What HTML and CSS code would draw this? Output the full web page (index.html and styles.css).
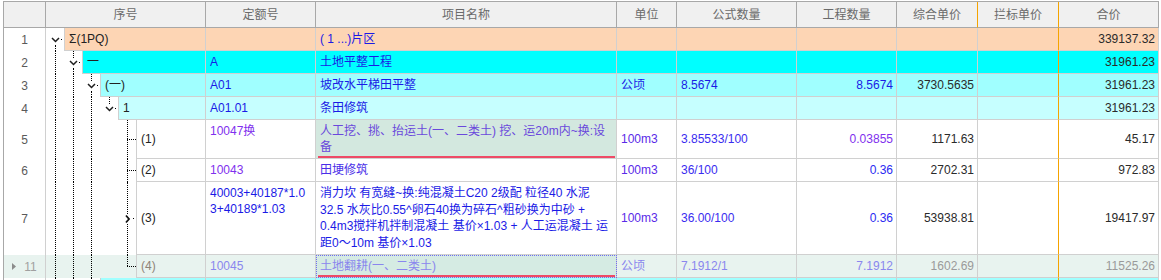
FILE: index.html
```html
<!DOCTYPE html>
<html lang="zh">
<head>
<meta charset="utf-8">
<title>预算表</title>
<link rel="stylesheet" href="styles.css">
</head>
<body>
<div class="grid">
  <div class="row head">
    <div class="h"></div>
    <div class="h">序号</div>
    <div class="h">定额号</div>
    <div class="h">项目名称</div>
    <div class="h">单位</div>
    <div class="h">公式数量</div>
    <div class="h">工程数量</div>
    <div class="h o">综合单价</div>
    <div class="h o">拦标单价</div>
    <div class="h">合价</div>
  </div>

  <div class="row r-peach">
    <div class="rn">1</div>
    <div class="tree">
      <span class="exp down"><span class="seg t"></span><svg class="knob" viewBox="0 0 18 10"><polyline points="6,3 9.5,6.5 13,3"/><rect x="15" y="4" width="1" height="1"/></svg><span class="seg b"></span></span>
      <div class="tc">Σ(1PQ)</div>
    </div>
    <div class="c"></div>
    <div class="c top blue">( 1 ...)片区</div>
    <div class="c"></div>
    <div class="c"></div>
    <div class="c"></div>
    <div class="c"></div>
    <div class="c o"></div>
    <div class="c num">339137.32</div>
  </div>

  <div class="row r-cyan">
    <div class="rn">2</div>
    <div class="tree">
      <span class="g v"></span>
      <span class="exp up down"><span class="seg t"></span><svg class="knob" viewBox="0 0 18 10"><polyline points="6,3 9.5,6.5 13,3"/><rect x="15" y="4" width="1" height="1"/></svg><span class="seg b"></span></span>
      <div class="tc">一</div>
    </div>
    <div class="c top blue">A</div>
    <div class="c top blue">土地平整工程</div>
    <div class="c"></div>
    <div class="c"></div>
    <div class="c"></div>
    <div class="c"></div>
    <div class="c o"></div>
    <div class="c num">31961.23</div>
  </div>

  <div class="row r-lc">
    <div class="rn">3</div>
    <div class="tree">
      <span class="g v"></span><span class="g v"></span>
      <span class="exp up down"><span class="seg t"></span><svg class="knob" viewBox="0 0 18 10"><polyline points="6,3 9.5,6.5 13,3"/><rect x="15" y="4" width="1" height="1"/></svg><span class="seg b"></span></span>
      <div class="tc">(一)</div>
    </div>
    <div class="c top blue">A01</div>
    <div class="c top blue">坡改水平梯田平整</div>
    <div class="c blue">公顷</div>
    <div class="c blue">8.5674</div>
    <div class="c num blue">8.5674</div>
    <div class="c num">3730.5635</div>
    <div class="c o"></div>
    <div class="c num">31961.23</div>
  </div>

  <div class="row r-llc">
    <div class="rn">4</div>
    <div class="tree">
      <span class="g v"></span><span class="g v"></span><span class="g v"></span>
      <span class="exp up"><span class="seg t"></span><svg class="knob" viewBox="0 0 18 10"><polyline points="6,3 9.5,6.5 13,3"/><rect x="15" y="4" width="1" height="1"/></svg><span class="seg b"></span></span>
      <div class="tc">1</div>
    </div>
    <div class="c top blue">A01.01</div>
    <div class="c top blue">条田修筑</div>
    <div class="c"></div>
    <div class="c"></div>
    <div class="c"></div>
    <div class="c"></div>
    <div class="c o"></div>
    <div class="c num">31961.23</div>
  </div>

  <div class="row h2">
    <div class="rn">5</div>
    <div class="tree">
      <span class="g v"></span><span class="g v"></span><span class="g v"></span><span class="g"></span>
      <span class="leaf"><span class="t"></span><span class="m"></span><span class="b"></span></span>
      <div class="tc">(1)</div>
    </div>
    <div class="c top violet">10047换</div>
    <div class="c top name-hl mauve nw">人工挖、挑、抬运土(一、二类土) 挖、运20m内~换:设<br>备</div>
    <div class="c unit">100m3</div>
    <div class="c qty">3.85533/100</div>
    <div class="c num violet">0.03855</div>
    <div class="c num">1171.63</div>
    <div class="c o"></div>
    <div class="c num">45.17</div>
  </div>

  <div class="row">
    <div class="rn">6</div>
    <div class="tree">
      <span class="g v"></span><span class="g v"></span><span class="g v"></span><span class="g"></span>
      <span class="leaf"><span class="t"></span><span class="m"></span><span class="b"></span></span>
      <div class="tc">(2)</div>
    </div>
    <div class="c top violet">10043</div>
    <div class="c top indigo">田埂修筑</div>
    <div class="c unit">100m3</div>
    <div class="c qty">36/100</div>
    <div class="c num blue2">0.36</div>
    <div class="c num">2702.31</div>
    <div class="c o"></div>
    <div class="c num">972.83</div>
  </div>

  <div class="row h4">
    <div class="rn">7</div>
    <div class="tree">
      <span class="g v"></span><span class="g v"></span><span class="g v"></span><span class="g"></span>
      <span class="exp up down"><span class="seg t"></span><svg class="knob" viewBox="0 0 18 10"><polyline class="bold" points="8,1.5 11,5 8,8.5"/><rect x="15" y="4" width="1" height="1"/></svg><span class="seg b"></span></span>
      <div class="tc">(3)</div>
    </div>
    <div class="c top blue nw">40003+40187*1.0<br>3+40189*1.03</div>
    <div class="c top blue nw tall">消力坎 有宽缝~换:纯混凝土C20 2级配 粒径40 水泥<br>32.5 水灰比0.55^卵石40换为碎石^粗砂换为中砂 +<br>0.4m3搅拌机拌制混凝土 基价×1.03 + 人工运混凝土 运<br>距0～10m 基价×1.03</div>
    <div class="c unit">100m3</div>
    <div class="c qty">36.00/100</div>
    <div class="c num blue2">0.36</div>
    <div class="c num">53938.81</div>
    <div class="c o"></div>
    <div class="c num">19417.97</div>
  </div>

  <div class="row sel">
    <div class="rn"><svg class="tri" viewBox="0 0 4 7"><polygon points="0,0 4,3.5 0,7"/></svg><span>11</span></div>
    <div class="tree">
      <span class="g v"></span><span class="g v"></span><span class="g v"></span><span class="g"></span>
      <span class="leaf last"><span class="t"></span><span class="m"></span><span class="b"></span></span>
      <div class="tc fade-t">(4)</div>
    </div>
    <div class="c top fade">10045</div>
    <div class="c top fade name-hl focus">土地翻耕(一、二类土)</div>
    <div class="c fade">公顷</div>
    <div class="c fade">7.1912/1</div>
    <div class="c num fade">7.1912</div>
    <div class="c num fade-n">1602.69</div>
    <div class="c o"></div>
    <div class="c num fade-n">11525.26</div>
  </div>

  <div class="row r-lc">
    <div class="rn"></div>
    <div class="tree">
      <span class="g v"></span><span class="g v"></span>
      <span class="exp up down"><span class="seg t"></span><svg class="knob" viewBox="0 0 18 10"><polyline points="6,3 9.5,6.5 13,3"/><rect x="15" y="4" width="1" height="1"/></svg><span class="seg b"></span></span>
      <div class="tc"></div>
    </div>
    <div class="c"></div>
    <div class="c"></div>
    <div class="c"></div>
    <div class="c"></div>
    <div class="c"></div>
    <div class="c"></div>
    <div class="c o"></div>
    <div class="c"></div>
  </div>
</div>
</body>
</html>
```

FILE: styles.css
```css
* { box-sizing: border-box; }

html, body {
  margin: 0;
  padding: 0;
  background: #ffffff;
  overflow: hidden;
}

.grid {
  margin: 1px 0 0 3px;
  border-top: 1px solid #a8a8a8;
  border-left: 1px solid #a8a8a8;
  width: 1156px;
  font: 12px/16px "Liberation Sans", "Noto Sans CJK SC", sans-serif;
  color: #2a2a2a;
}

.row {
  display: grid;
  grid-template-columns: 42px 160px 110px 301px 60px 120px 100px 81px 81px 100px;
  height: 23px;
}

.row.h2 { height: 39px; }
.row.h4 { height: 73px; }

/* header */
.head { height: 26px; background: #f0f0f0; }
.h {
  display: flex;
  align-items: center;
  justify-content: center;
  color: #6a6a6a;
  border-right: 1px solid #a8a8a8;
  border-bottom: 1px solid #a8a8a8;
  white-space: nowrap;
}
.h.o { border-right-color: #f5a300; }

/* row number */
.rn {
  display: flex;
  align-items: center;
  justify-content: center;
  gap: 8px;
  color: #5a5a5a;
  border-right: 1px solid #d0d0d0;
}
.tri { width: 4px; height: 7px; fill: #8c8c8c; }
.sel .rn span { color: #a0a0a0; }

/* tree column */
.tree {
  display: flex;
  border-right: 1px solid #d0d0d0;
}
.g { width: 18px; flex: none; }
.g.v {
  width: 10px;
  margin-right: 8px;
  border-right: 1px dotted #000;
}
.exp {
  width: 18px;
  flex: none;
  display: flex;
  flex-direction: column;
}
.exp .seg { flex: 1; width: 10px; }
.exp.up .seg.t { border-right: 1px dotted #000; }
.exp.down .seg.b { border-right: 1px dotted #000; }
.knob {
  display: block;
  width: 18px;
  height: 10px;
  flex: none;
}
.knob polyline {
  fill: none;
  stroke: #1e1e1e;
  stroke-width: 1.5;
}
.knob polyline.bold { stroke: #111; stroke-width: 1.8; }
.knob rect { fill: #000; }

.leaf {
  width: 18px;
  flex: none;
  display: flex;
  flex-direction: column;
}
.leaf .t, .leaf .b {
  flex: 1;
  width: 10px;
  border-right: 1px dotted #000;
}
.leaf.last .b { border-right: none; }
.leaf .m {
  height: 1px;
  width: 9px;
  margin-left: 9px;
  border-top: 1px dotted #000;
}

.tc {
  flex: 1;
  display: flex;
  align-items: center;
  padding-left: 4px;
  border-left: 1px solid #d0d0d0;
  border-bottom: 1px solid #d0d0d0;
  color: #222;
  white-space: nowrap;
}

/* data cells */
.c {
  display: flex;
  align-items: center;
  padding: 3px 3px 3px 4px;
  border-right: 1px solid #d0d0d0;
  border-bottom: 1px solid #d0d0d0;
  white-space: nowrap;
  overflow: hidden;
}
.c.top { align-items: flex-start; }
.c.num { justify-content: flex-end; }
.c.o { border-right-color: #f5a300; }
.c.tall { line-height: 16.5px; }
.nw { white-space: nowrap; }

/* row colours */
.r-peach .tc, .r-peach .c { background: #fdd5b4; }
.r-cyan .tc, .r-cyan .c { background: #00ffff; }
.r-lc .tc, .r-lc .c { background: #a0ffff; }
.r-llc .tc, .r-llc .c { background: #c6ffff; }
.sel { background: #e8f3ef; }

.name-hl {
  background-color: #d3e8df;
  background-image: linear-gradient(#ee4a66, #ee4a66);
  background-repeat: no-repeat;
  background-size: calc(100% - 3px) 2px;
  background-position: 2px 100%;
}
.sel .name-hl { background-color: #d5ebe3; }
.focus {
  outline: 1px dotted #6e6ef0;
  outline-offset: -1px;
}

/* text colours */
.blue { color: #1a1ae6; }
.blue2 { color: #2a2af2; }
.violet { color: #7f30ee; }
.mauve { color: #6a48dc; }
.indigo { color: #4a2ee8; }
.unit { color: #5a2ae8; }
.qty { color: #3a2cf0; }
.fade { color: #8a86ee; }
.fade-n { color: #9a9a9a; }
.fade-t { color: #8f8478; }
```
